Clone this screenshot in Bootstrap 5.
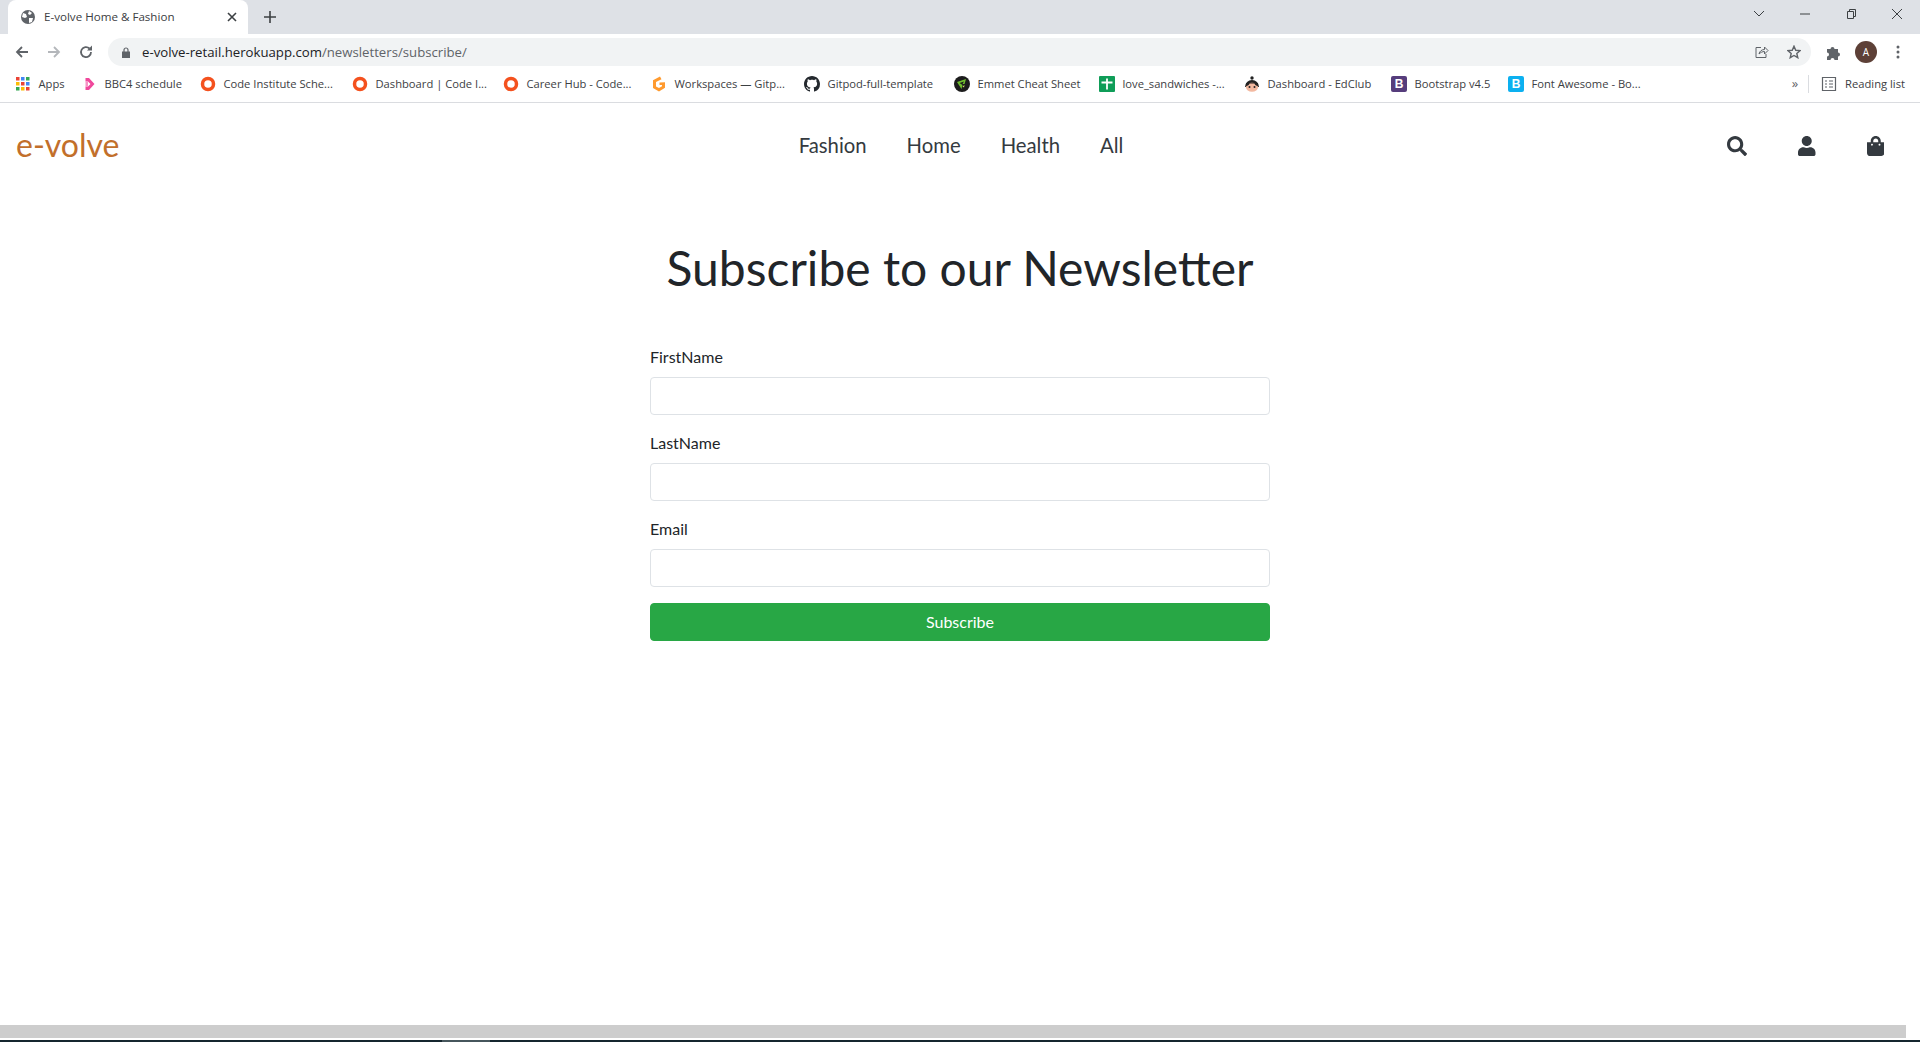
<!DOCTYPE html>
<html lang="en">
  <head>
    <meta charset="UTF-8" />
    <title>E-volve Home &amp; Fashion</title>
    <link rel="stylesheet" href="https://cdn.jsdelivr.net/npm/bootstrap@5.3.3/dist/css/bootstrap.min.css" />
    <style>
      html, body { height: 100%; overflow: hidden; }
      body { font-family: Lato, "Liberation Sans", sans-serif; color: #212529; }
      .shell { height: 1042px; }

      /* browser chrome */
      .chrome { font-family: "Open Sans", "Noto Sans", sans-serif; color: #3c4043; }
      .tabstrip { height: 34px; background: #dee1e6; padding-left: 8px; }
      .tab-on { width: 240px; height: 34px; background: #fff; border-radius: 8px 8px 0 0; padding: 0 11px 0 12px; font-size: 11.6px; }
      .tab-plus { margin-left: 13px; width: 18px; }
      .win-ctrls { margin-left: auto; width: 184px; padding-bottom: 6px; }
      .win-ctrls svg { width: 46px; }
      .toolbar { height: 32px; padding: 4px 0 0 0; }
      .nav-arrows { width: 108px; padding-left: 14px; gap: 16px; }
      .addr { width: 1703px; height: 28px; background: #f1f3f4; border-radius: 14px; padding: 0 10px 0 14px; font-size: 13.2px; }
      .addr-host { color: #202124; margin-left: 12px; padding-top: 1px; }
      .addr-path { color: #5f6368; }
      .addr-share { margin-right: 18px; }
      .tool-right { width: 109px; padding-left: 15px; }
      .avatar-a { width: 22px; height: 22px; border-radius: 50%; background: #5d4037; color: #fff; font-size: 10px; margin: 0 19px 0 14px; }
      .bookbar { height: 37px; padding-left: 15px; border-bottom: 1px solid #dadce0; font-size: 11.2px; white-space: nowrap; display: grid; grid-template-columns: 69px 116px 152px 151px 148px 153px 150px 145px 145px 147px 117px 134px 1fr; align-items: center; }
      .bm { gap: 7.5px; }
      .fav { width: 16px; height: 16px; flex: none; }
      .fav-bbc { width: 13px; height: 16px; flex: none; }
      .fav-txt { width: 16px; height: 16px; flex: none; border-radius: 2px; color: #fff; font: 700 12px/16px "Liberation Sans", sans-serif; text-align: center; }
      .fav-bs { background: #563d7c; }
      .fav-fa { background: #0cb0f0; }
      .book-end { padding-right: 15px; gap: 8px; justify-content: flex-end; }
      .book-more { color: #5f6368; font-size: 13px; margin-right: 2px; }
      .book-div { width: 1px; height: 18px; background: #dadce0; }

      /* site */
      .site-nav { height: 86px; padding: 0 20px 0 16px; }
      .brand-name { font-size: 32px; color: #c26f2b; text-decoration: none; line-height: 1; }
      .menu-links { gap: 40px; padding: 0 0 2px 6px; }
      .menu-links a { font-size: 20.3px; color: #343a40; text-decoration: none; }
      .icon-links { gap: 51px; padding-right: 15.5px; padding-bottom: 1px; }
      .icon-links svg { height: 20px; display: block; fill: #343a40; }
      .page-title { font-size: 48px; font-weight: 400; line-height: 1.2; margin: 50px 0 48px; text-align: center; }
      .sub-form { width: 620px; }
      .sub-btn { background: #28a745; border-color: #28a745; height: 38px; border-radius: 4px; }
      .form-control { border-radius: 4px; }

      /* bottom edge */
      .hscroll { height: 13px; width: 1906px; background: #cdcdcd; margin-top: auto; }
      .taskedge { height: 2px; margin-top: 2px; background: #15262f; }
      .taskedge span { display: block; width: 48px; height: 2px; margin-left: 442px; background: #46565c; }
    </style>
  </head>
  <body>
    <div class="shell d-flex flex-column">
      <div class="chrome">
        <div class="tabstrip d-flex align-items-center">
          <div class="tab-on d-flex align-items-center">
            <svg class="fav me-2" viewBox="0 0 16 16"><circle cx="8" cy="8" r="7" fill="#5f6368"/><path d="M3 4l3 1 1 3-2 1-3-1zM9 2l3 2-2 2-2-1zM9 9l4 0-1 4-3 1z" fill="#fff"/></svg>
            <span class="flex-grow-1">E-volve Home &amp; Fashion</span>
            <svg width="10" height="10" viewBox="0 0 10 10"><path d="M1 1l8 8M9 1l-8 8" stroke="#3c4043" stroke-width="1.6"/></svg>
          </div>
          <svg class="tab-plus" height="12" viewBox="0 0 12 12"><path d="M6 0v12M0 6h12" stroke="#3c4043" stroke-width="1.6"/></svg>
          <div class="win-ctrls d-flex align-items-center">
            <svg height="12" viewBox="0 0 46 12"><path d="M18 3l5 5 5-5" fill="none" stroke="#3c4043"/></svg>
            <svg height="12" viewBox="0 0 46 12"><path d="M18 6h10" stroke="#3c4043"/></svg>
            <svg height="12" viewBox="0 0 46 12"><path d="M19.500 3.500h6v7h-6zM21.500 3.500v-2h6v7h-2" fill="none" stroke="#3c4043"/></svg>
            <svg height="12" viewBox="0 0 46 12"><path d="M18 1l10 10M28 1L18 11" stroke="#3c4043"/></svg>
          </div>
        </div>

        <div class="toolbar d-flex align-items-center">
          <div class="nav-arrows d-flex align-items-center">
            <svg width="16" height="16" viewBox="0 0 16 16"><path d="M14 8H3M8 3L3 8l5 5" fill="none" stroke="#5f6368" stroke-width="1.8"/></svg>
            <svg width="16" height="16" viewBox="0 0 16 16"><path d="M2 8h11M8 3l5 5-5 5" fill="none" stroke="#b4b7bb" stroke-width="1.8"/></svg>
            <svg width="16" height="16" viewBox="0 0 16 16"><path d="M13 8a5 5 0 1 1-1.500-3.500" fill="none" stroke="#5f6368" stroke-width="1.8"/><path d="M14 1.500v5h-5z" fill="#5f6368"/></svg>
          </div>
          <div class="addr d-flex align-items-center">
            <svg width="8" height="11" viewBox="0 0 8 11"><path d="M0 4.500h8V11H0z" fill="#5f6368"/><path d="M2 5V3a2 2 0 0 1 4 0v2" fill="none" stroke="#5f6368" stroke-width="1.2"/></svg>
            <span class="addr-host">e-volve-retail.herokuapp.com<span class="addr-path">/newsletters/subscribe/</span></span>
            <svg class="ms-auto addr-share" width="14" height="14" viewBox="0 0 14 14"><path d="M6 2.500H1v10h10V9" fill="none" stroke="#5f6368"/><path d="M4 9c.5-3 3-4.500 5.500-4.500V2L13 5.500 9.500 9V6.500C7.500 6.500 5.500 7.500 4 9z" fill="none" stroke="#5f6368"/></svg>
            <svg width="14" height="14" viewBox="0 0 24 24"><path d="M12 2l3 7 7.500.6-5.700 4.900 1.700 7.300L12 18l-6.500 3.800 1.700-7.300L1.500 9.600 9 9z" fill="none" stroke="#5f6368" stroke-width="2.4"/></svg>
          </div>
          <div class="tool-right d-flex align-items-center">
            <svg width="15" height="15" viewBox="0 0 15 15"><path d="M1 4h3.500a2 2 0 1 1 4 0H12v3.500a2 2 0 1 1 0 4V15H8.500a2 2 0 1 0-4 0H1v-3.500a2 2 0 1 0 0-4z" fill="#5f6368"/></svg>
            <div class="avatar-a d-flex align-items-center justify-content-center">A</div>
            <svg width="4" height="14" viewBox="0 0 4 14"><circle cx="2" cy="2" r="1.5" fill="#5f6368"/><circle cx="2" cy="7" r="1.5" fill="#5f6368"/><circle cx="2" cy="12" r="1.5" fill="#5f6368"/></svg>
          </div>
        </div>

        <div class="bookbar">
          <div class="bm d-flex align-items-center">
            <svg class="fav" viewBox="0 0 16 16"><g><rect x="1" y="1" width="3.500" height="3.500" fill="#ea4335"/><rect x="6" y="1" width="3.500" height="3.500" fill="#4285f4"/><rect x="11" y="1" width="3.500" height="3.500" fill="#34a853"/><rect x="1" y="6" width="3.500" height="3.500" fill="#fbbc05"/><rect x="6" y="6" width="3.500" height="3.500" fill="#ea4335"/><rect x="11" y="6" width="3.500" height="3.500" fill="#4285f4"/><rect x="1" y="11" width="3.500" height="3.500" fill="#34a853"/><rect x="6" y="11" width="3.500" height="3.500" fill="#fbbc05"/><rect x="11" y="11" width="3.500" height="3.500" fill="#ea4335"/></g></svg>
            <span>Apps</span>
          </div>
          <div class="bm d-flex align-items-center">
            <svg class="fav-bbc" viewBox="0 0 13 16"><path d="M1.500 2H5l5.500 6L5 14H1.500v-3.500H4L6.500 8 4 5.500H1.500z" fill="#f0489c"/><path d="M1.500 5.500h2.500v5H1.500z" fill="#f793c5"/></svg>
            <span>BBC4 schedule</span>
          </div>
          <div class="bm d-flex align-items-center">
            <svg class="fav" viewBox="0 0 16 16"><circle cx="8" cy="8" r="5.5" fill="none" stroke="#f4511e" stroke-width="3.5"/></svg>
            <span>Code Institute Sche...</span>
          </div>
          <div class="bm d-flex align-items-center">
            <svg class="fav" viewBox="0 0 16 16"><circle cx="8" cy="8" r="5.5" fill="none" stroke="#f4511e" stroke-width="3.5"/></svg>
            <span>Dashboard | Code I...</span>
          </div>
          <div class="bm d-flex align-items-center">
            <svg class="fav" viewBox="0 0 16 16"><circle cx="8" cy="8" r="5.5" fill="none" stroke="#f4511e" stroke-width="3.5"/></svg>
            <span>Career Hub - Code...</span>
          </div>
          <div class="bm d-flex align-items-center">
            <svg class="fav" viewBox="0 0 16 16"><path d="M9 .5l1.500 2.700L5 6v4.500L8 12l3-1.700V9H8.500V6.500L14 6.200v5.500L8 15.500 2 12V4.300z" fill="#ff9a2e"/></svg>
            <span>Workspaces — Gitp...</span>
          </div>
          <div class="bm d-flex align-items-center">
            <svg class="fav" viewBox="0 0 16 16"><path fill="#24292e" d="M8 0C3.580 0 0 3.580 0 8c0 3.540 2.290 6.530 5.470 7.590.4.070.55-.17.55-.38 0-.19-.01-.82-.01-1.490-2.010.37-2.530-.49-2.690-.94-.09-.23-.48-.94-.82-1.130-.28-.15-.68-.52-.01-.53.63-.01 1.080.58 1.230.82.72 1.210 1.870.87 2.330.66.07-.52.28-.87.51-1.070-1.780-.2-3.640-.89-3.640-3.950 0-.87.31-1.590.82-2.150-.08-.2-.36-1.020.08-2.120 0 0 .67-.21 2.200.82.64-.18 1.320-.27 2-.27.68 0 1.360.09 2 .27 1.530-1.040 2.200-.82 2.200-.82.44 1.100.16 1.920.08 2.120.51.56.82 1.270.82 2.150 0 3.070-1.870 3.750-3.650 3.950.29.25.54.73.54 1.480 0 1.070-.01 1.930-.01 2.200 0 .21.15.46.55.38A8.013 8.013 0 0016 8c0-4.420-3.580-8-8-8z"/></svg>
            <span>Gitpod-full-template</span>
          </div>
          <div class="bm d-flex align-items-center">
            <svg class="fav" viewBox="0 0 16 16"><circle cx="8" cy="8" r="8" fill="#1c1c1c"/><path d="M3 6l9-3-1.500 5H8.500L10 5.500 5.500 7l3 2-1 4z" fill="#6fbf2e"/><path d="M8.500 10.500l2-1.500-.5 2.500z" fill="#d8e86a"/></svg>
            <span>Emmet Cheat Sheet</span>
          </div>
          <div class="bm d-flex align-items-center">
            <svg class="fav" viewBox="0 0 16 16"><rect width="16" height="16" rx="1" fill="#0f9d58"/><path d="M2.500 6.500h11M8 2.500v11" stroke="#fff" stroke-width="1.8"/></svg>
            <span>love_sandwiches -...</span>
          </div>
          <div class="bm d-flex align-items-center">
            <svg class="fav" viewBox="0 0 16 16"><circle cx="8" cy="2" r="1.7" fill="#222"/><path d="M1 11a7 7 0 0 1 14 0z" fill="#222"/><ellipse cx="8" cy="11.200" rx="6" ry="4.500" fill="#f3b9a0"/><path d="M2 10c2 0 3-1 3.500-2.500h5C11 9 12 10 14 10V7H2z" fill="#222"/><circle cx="5.500" cy="11" r="1" fill="#222"/><circle cx="10.500" cy="11" r="1" fill="#222"/></svg>
            <span>Dashboard - EdClub</span>
          </div>
          <div class="bm d-flex align-items-center">
            <span class="fav-txt fav-bs">B</span>
            <span>Bootstrap v4.5</span>
          </div>
          <div class="bm d-flex align-items-center">
            <span class="fav-txt fav-fa">B</span>
            <span>Font Awesome - Bo...</span>
          </div>
          <div class="book-end d-flex align-items-center">
            <span class="book-more">»</span>
            <span class="book-div"></span>
            <svg class="fav ms-1" viewBox="0 0 16 16"><path d="M1.500 1.500h13v13h-13zM4 5h2M4 8h2M4 11h2M8 5h4M8 8h4M8 11h4" fill="none" stroke="#5f6368" stroke-width="1.2"/></svg>
            <span>Reading list</span>
          </div>
        </div>
      </div>

      <nav class="site-nav row g-0 align-items-center">
        <div class="col-4"><a class="brand-name" href="#">e-volve</a></div>
        <div class="col-4 d-flex justify-content-center menu-links">
          <a href="#">Fashion</a>
          <a href="#">Home</a>
          <a href="#">Health</a>
          <a href="#">All</a>
        </div>
        <div class="col-4 d-flex justify-content-end icon-links">
          <a href="#"><svg viewBox="0 0 512 512"><path d="M505 442.700L405.300 343c-4.500-4.500-10.600-7-17-7H372c27.600-35.300 44-79.700 44-128C416 93.100 322.900 0 208 0S0 93.100 0 208s93.100 208 208 208c48.300 0 92.700-16.400 128-44v16.300c0 6.400 2.500 12.500 7 17l99.700 99.700c9.400 9.400 24.600 9.400 33.900 0l28.300-28.300c9.400-9.400 9.400-24.600.1-34zM208 336c-70.700 0-128-57.200-128-128 0-70.700 57.200-128 128-128 70.700 0 128 57.200 128 128 0 70.700-57.200 128-128 128z"/></svg></a>
          <a href="#"><svg viewBox="0 0 448 512"><path d="M224 256c70.700 0 128-57.300 128-128S294.700 0 224 0 96 57.300 96 128s57.300 128 128 128zm89.600 32h-16.700c-22.200 10.200-46.900 16-72.900 16s-50.600-5.800-72.900-16h-16.700C60.200 288 0 348.200 0 422.400V464c0 26.500 21.500 48 48 48h352c26.500 0 48-21.500 48-48v-41.600c0-74.200-60.200-134.400-134.400-134.400z"/></svg></a>
          <a href="#"><svg viewBox="0 0 448 512"><path d="M352 160v-32C352 57.420 294.579 0 224 0 153.420 0 96 57.420 96 128v32H0v272c0 44.183 35.817 80 80 80h288c44.183 0 80-35.817 80-80V160h-96zm-192-32c0-35.290 28.710-64 64-64s64 28.710 64 64v32H160v-32zm160 120c-13.255 0-24-10.745-24-24s10.745-24 24-24 24 10.745 24 24-10.745 24-24 24zm-192 0c-13.255 0-24-10.745-24-24s10.745-24 24-24 24 10.745 24 24-10.745 24-24 24z"/></svg></a>
        </div>
      </nav>

      <main>
        <h1 class="page-title">Subscribe to our Newsletter</h1>
        <form class="sub-form mx-auto">
          <div class="mb-3">
            <label class="form-label" for="fname">FirstName</label>
            <input class="form-control" id="fname" type="text" />
          </div>
          <div class="mb-3">
            <label class="form-label" for="lname">LastName</label>
            <input class="form-control" id="lname" type="text" />
          </div>
          <div class="mb-3">
            <label class="form-label" for="email">Email</label>
            <input class="form-control" id="email" type="email" />
          </div>
          <button class="btn btn-success w-100 sub-btn" type="button">Subscribe</button>
        </form>
      </main>

      <div class="hscroll"></div>
      <div class="taskedge"><span></span></div>
    </div>
  </body>
</html>
